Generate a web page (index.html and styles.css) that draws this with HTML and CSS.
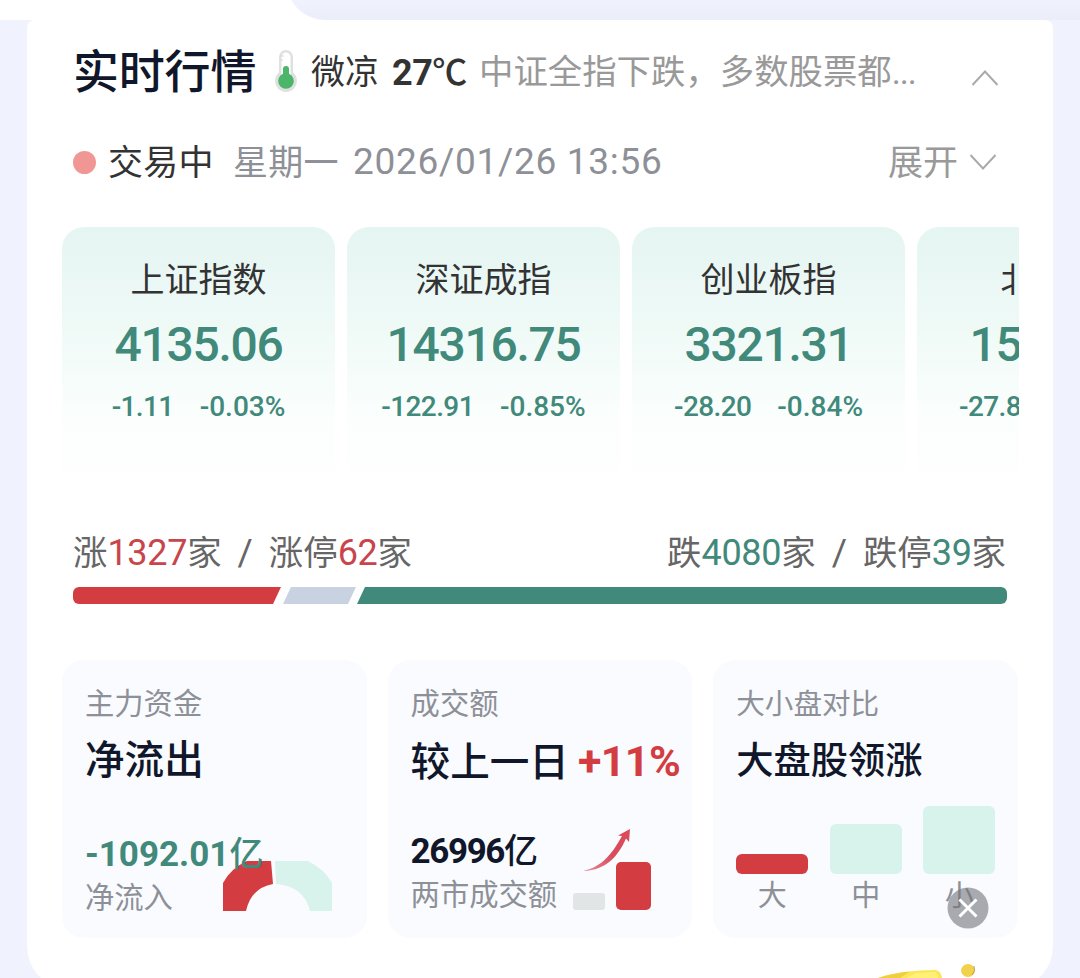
FILE: index.html
```html
<!DOCTYPE html>
<html lang="zh-CN">

<head>
    <meta charset="UTF-8">
    <meta name="viewport" content="width=device-width, initial-scale=1.0">
    <title>实时行情</title>
    <link rel="stylesheet" href="styles.css">
</head>

<body>
    <div id="top">
        <div class="top_tab"></div>
    </div>
    <div id="wrap">
        <div class="header">
            <h1>实时行情</h1>
            <svg class="thermo" width="24" height="46" viewBox="0 0 24 46">
                <path d="M5 9a7 7 0 0 1 14 0v15.500a11 11 0 1 1-14 0z" fill="#dfe1e1"/>
                <path d="M7.500 9a4.500 4.500 0 0 1 9 0v18h-9z" fill="#fff"/>
                <path d="M6 8h4M6 12h3" stroke="#d5d7d7" stroke-width="1"/>
                <circle cx="12" cy="33" r="7.800" fill="#4bb569"/>
                <path d="M9 32V21a3 3 0 0 1 6 0v11z" fill="#4bb569"/>
            </svg>
            <span class="weather">微凉</span>
            <span class="temp">27<span class="unit">℃</span></span>
            <span class="summary">中证全指下跌，多数股票都<span class="dots">...</span></span>
            <svg class="up" width="28" height="18" viewBox="0 0 28 18"><path d="M1.500 16L14 2.500 26.500 16" fill="none" stroke="#aaa" stroke-width="2"/></svg>
        </div>

        <div class="status">
            <i class="dot"></i>
            <span class="trading">交易中</span>
            <span class="week">星期一</span>
            <span class="date">2026/01/26 13:56</span>
            <span class="expand">展开</span>
            <svg width="28" height="18" viewBox="0 0 28 18"><path d="M1.500 2L14 15.500 26.500 2" fill="none" stroke="#aaa" stroke-width="2"/></svg>
        </div>

        <div class="indexes">
            <div class="index">
                <div class="name">上证指数</div>
                <div class="price">4135.06</div>
                <div class="change"><span>-1.11</span><span>-0.03%</span></div>
            </div>
            <div class="index">
                <div class="name">深证成指</div>
                <div class="price">14316.75</div>
                <div class="change"><span>-122.91</span><span>-0.85%</span></div>
            </div>
            <div class="index">
                <div class="name">创业板指</div>
                <div class="price">3321.31</div>
                <div class="change"><span>-28.20</span><span>-0.84%</span></div>
            </div>
            <div class="index">
                <div class="name">北证50</div>
                <div class="price">1551.80</div>
                <div class="change"><span>-27.80</span><span>-1.76%</span></div>
            </div>
        </div>

        <div class="breadth">
            <div>涨<b class="red">1327</b>家<em>/</em>涨停<b class="red">62</b>家</div>
            <div>跌<b class="green">4080</b>家<em>/</em>跌停<b class="green">39</b>家</div>
        </div>
        <div class="bar">
            <div class="bar_up"></div>
            <div class="bar_flat"></div>
            <div class="bar_down"></div>
        </div>

        <div class="cards">
            <div class="card">
                <div class="label">主力资金</div>
                <div class="title">净流出</div>
                <div class="value green">-1092.01<span>亿</span></div>
                <div class="label">净流入</div>
                <svg class="donut" width="110" height="50" viewBox="0 0 110 50">
                    <path d="M0 50V22Q8 7 24 0H48L50 23Q28 27 23 50z" fill="#d33c41"/>
                    <path d="M52 0H85Q101 8 109 22V50H87Q81 25 53 23z" fill="#d8f2ec"/>
                </svg>
            </div>
            <div class="card">
                <div class="label">成交额</div>
                <div class="title">较上一日<span class="rate">+11%</span></div>
                <div class="value amount">26996<span>亿</span></div>
                <div class="label">两市成交额</div>
                <svg class="volume" width="80" height="84" viewBox="0 0 80 84">
                    <defs>
                        <linearGradient id="arrow" x1="0" y1="1" x2="1" y2="0">
                            <stop offset="0" stop-color="#e58a98"/>
                            <stop offset=".5" stop-color="#d94b5d"/>
                            <stop offset="1" stop-color="#dc4a58"/>
                        </linearGradient>
                    </defs>
                    <path d="M10 44C30 40 40 25 49 9L45 8.500 57 2 56 15 53 11.500C45 29 34 43 10 44z" fill="url(#arrow)"/>
                    <rect x="0" y="66" width="32" height="17" rx="3" fill="#e1e5e5"/>
                    <rect x="43" y="35" width="35" height="48" rx="5" fill="#d33c41"/>
                </svg>
            </div>
            <div class="card">
                <div class="label compare">大小盘对比</div>
                <div class="title small">大盘股领涨</div>
                <div class="sizes">
                    <div class="size"><i class="large"></i><span>大</span></div>
                    <div class="size"><i class="mid"></i><span>中</span></div>
                    <div class="size"><i class="little"></i><span>小</span></div>
                </div>
            </div>
        </div>
    </div>

    <svg class="close" width="42" height="42" viewBox="0 0 42 42">
        <circle cx="21" cy="21" r="20.500" fill="#73757a" fill-opacity=".6"/>
        <path d="M12.500 12.500l17 17M29.500 12.500l-17 17" stroke="#fff" stroke-width="3"/>
    </svg>
    <svg class="promo" width="110" height="18" viewBox="0 0 110 18">
        <path d="M8 18Q32 10 66 10Q71 11 72 18z" fill="#fbe65a"/>
        <path d="M8 18Q22 13 40 11.500L30 18z" fill="#efcf3d"/>
        <path d="M36 18L46 13 66 12 68 18z" fill="#fff176"/>
        <ellipse cx="98" cy="10.500" rx="7" ry="6.500" fill="#f1d24d"/>
        <path d="M102 15Q106 11 104 6" fill="none" stroke="#b5a368" stroke-width="1"/>
    </svg>
</body>

</html>
```

FILE: styles.css
```css
body {
    margin: 0;
    width: 1080px;
    height: 978px;
    overflow: hidden;
    position: relative;
    background-color: #f0f3fd;
    font-family: Roboto, "Noto Sans CJK SC", sans-serif;
    color: #333;
}

h1, i, em, b {
    margin: 0;
    font-style: normal;
    font-weight: normal;
}

svg {
    display: block;
    flex: none;
}

#top {
    display: flex;
    align-items: flex-end;
    height: 20px;
    padding-left: 288px;
    background-color: white;
    overflow: hidden;
}

.top_tab {
    flex: 1;
    height: 34px;
    background: linear-gradient(#f0f3fd 40%, #ebeef8);
    border-bottom-left-radius: 38px 34px;
}

#wrap {
    box-sizing: border-box;
    width: 1026px;
    height: 970px;
    margin: 0 auto;
    padding: 21px 0 0 35px;
    background-color: white;
    border-radius: 8px 8px 44px 44px;
}

.header, .status {
    display: flex;
    align-items: center;
    height: 60px;
    padding-left: 11px;
    white-space: nowrap;
}

.header h1 {
    width: 201px;
    padding-bottom: 7px;
    font-size: 46px;
    font-weight: 500;
    letter-spacing: -0.2px;
    color: #11172b;
}

.weather {
    width: 81px;
    margin-left: 13px;
    padding-bottom: 4px;
    font-size: 34px;
}

.temp {
    width: 87px;
    padding-bottom: 3px;
    font-size: 36px;
    font-weight: bold;
    letter-spacing: -0.5px;
}

.unit {
    font-size: 35px;
    font-weight: 500;
}

.summary {
    width: 492px;
    padding-bottom: 4px;
    font-size: 34.4px;
    color: #999;
}

.dots {
    letter-spacing: -1px;
}

.up {
    margin-top: 14px;
}

.status {
    height: 46px;
    margin-top: 38px;
    font-size: 35px;
    color: #999;
}

.dot {
    width: 23px;
    height: 23px;
    margin-right: 12px;
    border-radius: 50%;
    background-color: #f09795;
}

.trading, .week, .expand {
    padding-bottom: 5px;
}

.trading {
    width: 125px;
    letter-spacing: 0.3px;
    color: #333;
}

.week {
    width: 120px;
    letter-spacing: 0.3px;
    color: #8d9097;
}

.date {
    flex: 1;
    padding-bottom: 2px;
    font-size: 37px;
    letter-spacing: 0.7px;
    color: #8d9097;
}

.expand {
    margin-right: 11px;
}

.status svg {
    margin-right: 56px;
}

.indexes {
    display: flex;
    gap: 12px;
    width: 957px;
    height: 253px;
    margin-top: 42px;
    overflow: hidden;
}

.index {
    flex: none;
    box-sizing: border-box;
    width: 273px;
    padding-top: 28px;
    border-radius: 22px 22px 0 0;
    background: linear-gradient(#e5f5f2, #effaf7 40%, #fafefd 72%, #fefffe);
    text-align: center;
}

.name {
    height: 50px;
    line-height: 50px;
    font-size: 34px;
}

.price {
    height: 64px;
    line-height: 64px;
    margin-top: 8px;
    font-size: 48px;
    font-weight: 500;
    letter-spacing: -1.3px;
    color: #41897a;
}

.change {
    display: flex;
    justify-content: center;
    gap: 26px;
    height: 40px;
    line-height: 40px;
    margin-top: 10px;
    font-size: 28px;
    font-weight: 500;
    color: #41897a;
}

.change span:first-child {
    letter-spacing: -0.6px;
}

.breadth {
    display: flex;
    justify-content: space-between;
    width: 933px;
    height: 60px;
    line-height: 60px;
    margin: 43px 0 0 11px;
    font-size: 34.4px;
    color: #666;
}

.breadth b {
    font-size: 36px;
    letter-spacing: -0.3px;
}

.breadth em {
    margin: 0 16px;
    font-size: 37px;
}

.breadth .red {
    color: #c8454b;
}

.green {
    color: #41897a;
}

.bar {
    display: flex;
    width: 934px;
    height: 17px;
    margin: 4px 0 0 11px;
    border-radius: 6px;
    overflow: hidden;
}

.bar_up {
    width: 208px;
    background-color: #d33c41;
    clip-path: polygon(0 0, 100% 0, 200px 100%, 0 100%);
}

.bar_flat {
    width: 73px;
    margin-left: 2px;
    background-color: #c8d2e0;
    clip-path: polygon(8px 0, 100% 0, 65px 100%, 0 100%);
}

.bar_down {
    flex: 1;
    margin-left: 1px;
    background-color: #41897a;
    clip-path: polygon(8px 0, 100% 0, 100% 100%, 0 100%);
}

.cards {
    display: flex;
    gap: 21px;
    margin-top: 56px;
}

.card {
    position: relative;
    box-sizing: border-box;
    width: 304.6px;
    height: 278px;
    padding: 23px 0 0 23px;
    border-radius: 22px;
    background-color: #f9fbff;
    white-space: nowrap;
}

.label {
    height: 42px;
    line-height: 42px;
    font-size: 29.3px;
    color: #8d9097;
}

.compare {
    font-size: 28.6px;
}

.title {
    height: 60px;
    line-height: 60px;
    margin-top: 6px;
    font-size: 39.6px;
    font-weight: 500;
    color: #11172b;
}

.title.small {
    font-size: 37.3px;
}

.rate {
    margin-left: 9px;
    font-size: 43px;
    font-weight: bold;
    letter-spacing: -0.6px;
    color: #d33c41;
}

.value {
    height: 50px;
    line-height: 50px;
    margin-top: 38px;
    font-size: 35px;
    font-weight: bold;
    position: relative;
    z-index: 1;
}

.value + .label {
    margin-top: -2px;
}

.value span {
    font-size: 34px;
    font-weight: 500;
}

.amount {
    margin-top: 35px;
    letter-spacing: -1.4px;
    color: #11172b;
}

.donut {
    position: absolute;
    left: 161px;
    bottom: 27px;
}

.volume {
    position: absolute;
    left: 185px;
    bottom: 27px;
}

.sizes {
    display: flex;
    align-items: flex-end;
    gap: 21.500px;
    height: 127px;
}

.size {
    width: 72px;
    text-align: center;
    font-size: 29px;
    line-height: 44px;
    color: #8d9097;
}

.size i {
    display: block;
    border-radius: 6px;
    background-color: #d8f2ec;
}

.size .large {
    height: 20px;
    background-color: #d33c41;
}

.size .mid {
    height: 50px;
}

.size .little {
    height: 68px;
}

.close {
    position: absolute;
    left: 947px;
    top: 887px;
}

.promo {
    position: absolute;
    left: 870px;
    top: 960px;
}
```
